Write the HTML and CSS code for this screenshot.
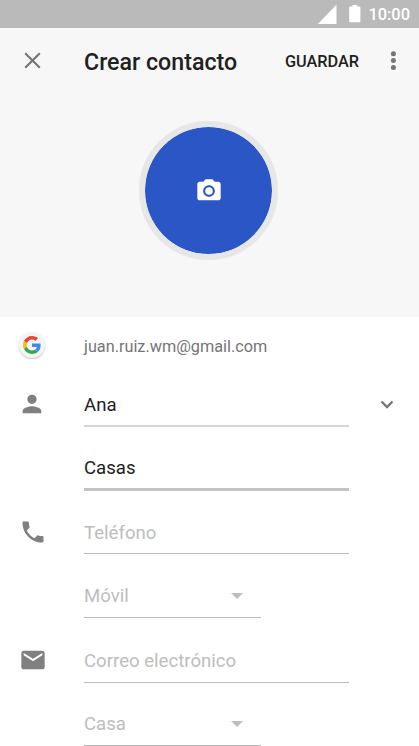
FILE: index.html
```
<!DOCTYPE html>
<html lang="es">
<head>
<meta charset="utf-8">
<title>Crear contacto</title>
<link rel="stylesheet" href="styles.css">
</head>
<body>
<div class="status">
  <svg class="signal" width="19" height="20" viewBox="0 0 19 20"><path d="M0 20 18.500 .5V20z"/></svg>
  <svg class="battery" width="12" height="18" viewBox="0 0 12 18"><path d="M3.400 0h4.800v1.600H10.600q.8 0 .8.8v14q0 .8-.8.8H1q-.8 0-.8-.8v-14Q.2 1.600 1 1.600h2.400z"/></svg>
  <span class="time">10:00</span>
</div>
<header class="hero">
  <div class="toolbar">
    <svg class="close" width="18" height="18" viewBox="0 0 18 18"><path d="M1.200 1.200l14.600 14.600M15.800 1.200l-14.600 14.600"/></svg>
    <h1 class="title">Crear contacto</h1>
    <span class="save">GUARDAR</span>
    <svg class="more" width="6" height="20" viewBox="0 0 6 20"><circle cx="3.400" cy="2.700" r="2.500"/><circle cx="3.400" cy="9.600" r="2.500"/><circle cx="3.400" cy="16.600" r="2.500"/></svg>
  </div>
  <div class="photo">
    <svg width="28" height="28" viewBox="0 0 24 24"><circle cx="12" cy="12" r="3.200"/><path d="M9 2 7.170 4H4c-1.100 0-2 .9-2 2v12c0 1.100.9 2 2 2h16c1.100 0 2-.9 2-2V6c0-1.100-.9-2-2-2h-3.170L15 2H9zm3 15c-2.760 0-5-2.240-5-5s2.240-5 5-5 5 2.240 5 5-2.240 5-5 5z"/></svg>
  </div>
</header>
<main class="form">
  <div class="row account">
    <span class="badge"><svg width="18" height="18" viewBox="0 0 48 48"><path fill="#EA4335" d="M24 9.500c3.540 0 6.710 1.220 9.210 3.600l6.850-6.850C35.900 2.380 30.470 0 24 0 14.620 0 6.510 5.380 2.560 13.220l7.980 6.190C12.430 13.720 17.740 9.500 24 9.500z"/><path fill="#4285F4" d="M46.980 24.550c0-1.570-.15-3.090-.38-4.550H24v9.020h12.940c-.58 2.960-2.260 5.480-4.780 7.180l7.730 6c4.510-4.180 7.090-10.360 7.090-17.650z"/><path fill="#FBBC05" d="M10.530 28.590c-.48-1.450-.76-2.990-.76-4.590s.27-3.140.76-4.590l-7.980-6.190C.92 16.460 0 20.120 0 24c0 3.880.92 7.540 2.560 10.780l7.970-6.190z"/><path fill="#34A853" d="M24 48c6.480 0 11.930-2.130 15.890-5.810l-7.730-6c-2.150 1.450-4.920 2.300-8.160 2.300-6.260 0-11.570-4.220-13.470-9.910l-7.980 6.190C6.510 42.620 14.620 48 24 48z"/></svg></span>
    <span class="email">juan.ruiz.wm@gmail.com</span>
  </div>
  <div class="row name">
    <svg class="icon" width="28" height="28" viewBox="0 0 24 24"><path d="M12 12c2.210 0 4-1.790 4-4s-1.790-4-4-4-4 1.790-4 4 1.790 4 4 4zm0 2c-2.670 0-8 1.340-8 4v2h16v-2c0-2.660-5.330-4-8-4z"/></svg>
    <div class="field">Ana</div>
    <svg class="expand" width="14" height="9" viewBox="0 0 14 9"><path d="M1.500 1.500 7 7l5.500-5.500"/></svg>
  </div>
  <div class="row surname">
    <div class="field focused">Casas</div>
  </div>
  <div class="row phone">
    <svg class="icon" width="28" height="28" viewBox="0 0 24 24"><path d="M6.620 10.790c1.440 2.830 3.760 5.140 6.590 6.590l2.200-2.200c.27-.27.67-.36 1.020-.24 1.120.37 2.330.57 3.570.57.55 0 1 .45 1 1V20c0 .55-.45 1-1 1-9.390 0-17-7.610-17-17 0-.55.45-1 1-1h3.500c.55 0 1 .45 1 1 0 1.250.2 2.450.57 3.570.11.35.03.74-.25 1.020l-2.200 2.200z"/></svg>
    <div class="field hint">Teléfono</div>
  </div>
  <div class="row phone-type">
    <div class="field hint select">Móvil</div>
  </div>
  <div class="row mail">
    <svg class="icon" width="28" height="28" viewBox="0 0 24 24"><path d="M20 4H4c-1.100 0-2 .9-2 2v12c0 1.100.9 2 2 2h16c1.100 0 2-.9 2-2V6c0-1.100-.9-2-2-2zm0 4-8 5-8-5V6l8 5 8-5v2z"/></svg>
    <div class="field hint">Correo electrónico</div>
  </div>
  <div class="row mail-type">
    <div class="field hint select">Casa</div>
  </div>
</main>
</body>
</html>
```
FILE: styles.css
```
* { box-sizing: border-box; }
body {
  margin: 0;
  width: 419px;
  height: 746px;
  overflow: hidden;
  background: #fff;
  color: #212121;
  font-family: Roboto, "Liberation Sans", sans-serif;
}
svg { display: block; flex: none; }
.status {
  display: flex;
  align-items: flex-start;
  justify-content: flex-end;
  height: 28px;
  padding-right: 9px;
  background: #bababa;
  color: #fff;
  fill: #fff;
}
.signal { margin: 4px 12px 0 0; }
.battery { margin: 5px 7px 0 0; }
.time { font-size: 16.4px; line-height: 20px; margin-top: 5px; font-weight: 500; }
.hero { height: 289px; background: #f7f7f7; }
.toolbar {
  display: flex;
  align-items: center;
  height: 66px;
  padding: 0 23px 0 24px;
}
.close { margin-right: 42px; stroke: #757575; stroke-width: 2.1; }
.title { margin: 2px 0 0; font-size: 23.2px; line-height: 28px; font-weight: 500; white-space: nowrap; }
.save { margin-left: auto; margin-right: 31px; padding-top: 1px; font-size: 16.3px; font-weight: 500; }
.more { fill: #757575; }
.photo {
  display: flex;
  align-items: center;
  justify-content: center;
  width: 139px;
  height: 139px;
  margin: 27px auto 0 139px;
  border: 6px solid #e7e7e7;
  border-radius: 50%;
  background: #2a56c6;
  background-clip: padding-box;
  fill: #fff;
}
.photo svg { margin-left: 1px; }
.form { display: flex; flex-direction: column; }
.row {
  display: grid;
  grid-template-columns: 84px 265px 1fr;
  align-items: end;
}
.account { height: 58px; align-items: center; }
.badge {
  display: flex;
  align-items: center;
  justify-content: center;
  width: 26px;
  height: 26px;
  margin: 0 0 2px 19px;
  border-radius: 50%;
  background: #f5f5f5;
  box-shadow: 0 1px 1.5px rgba(0,0,0,.25);
}
.email { color: #757575; font-size: 16.25px; line-height: 20px; padding-top: 1px; }
.name { height: 52px; }
.surname { height: 64px; }
.phone { height: 63px; }
.phone-type { height: 64px; }
.mail { height: 65px; }
.mail-type { height: 63px; }
.icon { margin: 0 0 9px 18.5px; fill: #808080; }
.name .icon { margin: 0 0 9.500px 18.300px; }
.phone .icon { margin-bottom: 8px; }
.expand { margin: 0 0 18px 30.500px; fill: none; stroke: #757575; stroke-width: 2.3; }
.field {
  grid-column: 2;
  padding-bottom: 9px;
  border-bottom: 1px solid #bdbdbd;
  font-size: 18.6px;
  line-height: 22px;
}
.name .field { border-bottom: 2px solid #d6d6d6; }
.focused { border-bottom: 3px solid #c4c4c4; }
.hint { color: #bdbdbd; }
.mail .field, .select { padding-bottom: 10px; }
.select {
  display: flex;
  align-items: center;
  justify-content: space-between;
  width: 177px;
}
.select::after {
  content: "";
  margin-right: 18px;
  border: 6px solid transparent;
  border-top-color: #bdbdbd;
  border-bottom: 0;
}
```
